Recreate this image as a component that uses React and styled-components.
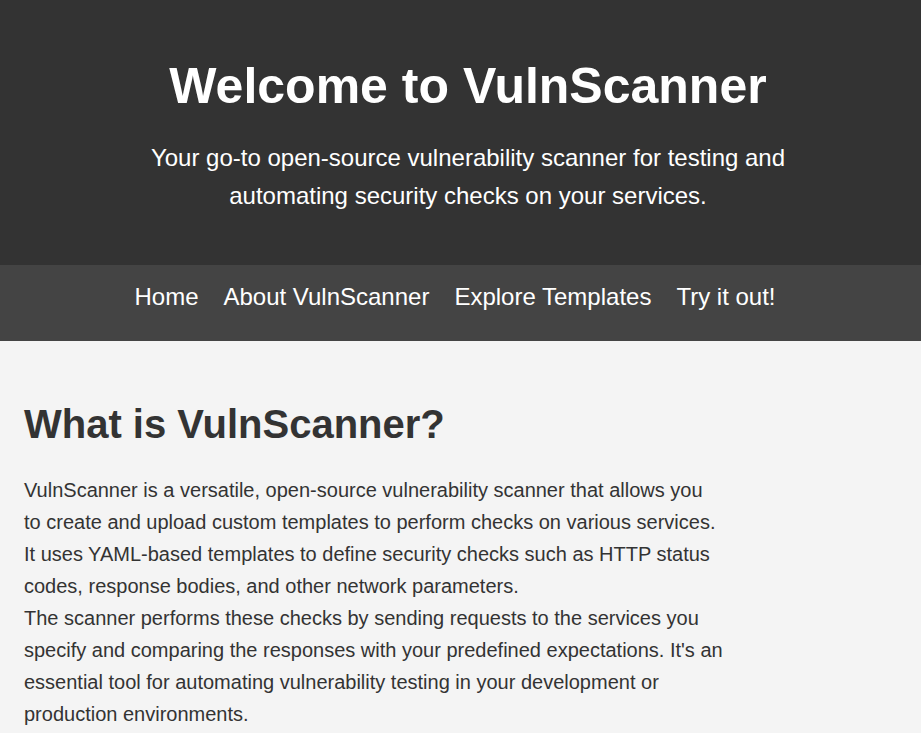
import React from "react";
import styled, { createGlobalStyle } from "styled-components";

const GlobalStyle = createGlobalStyle`
  html, body {
    margin: 0;
    padding: 0;
    background: #f4f4f4;
    font-family: "Liberation Sans", Arial, sans-serif;
    color: #333;
  }
`;

const Header = styled.header`
  background: #333;
  color: #fff;
  text-align: center;
  padding: 58px 20px 50px 35px;
`;

const Title = styled.h1`
  margin: 0 0 23px;
  font-size: 50px;
  font-weight: bold;
  line-height: 1.15;
`;

const Tagline = styled.p`
  margin: 0 auto;
  max-width: 660px;
  font-size: 24px;
  line-height: 1.6;
`;

const Nav = styled.nav`
  background: #444;
  display: flex;
  justify-content: center;
  gap: 25px;
  padding: 18px 31px 30px 20px;
`;

const NavLink = styled.a`
  color: #fff;
  text-decoration: none;
  font-size: 24px;
  line-height: 1.15;
  cursor: pointer;
`;

const Main = styled.main`
  padding: 60px 24px 40px;
`;

const Heading = styled.h2`
  margin: 0 0 27px;
  font-size: 40px;
  font-weight: bold;
  line-height: 1.15;
  color: #333;
`;

const Paragraph = styled.p`
  margin: 0;
  max-width: 700px;
  font-size: 20px;
  line-height: 1.6;
  color: #333;
`;

export default function App() {
  return (
    <>
      <GlobalStyle />
      <Header>
        <Title>Welcome to VulnScanner</Title>
        <Tagline>
          Your go-to open-source vulnerability scanner for testing and
          automating security checks on your services.
        </Tagline>
      </Header>
      <Nav>
        <NavLink>Home</NavLink>
        <NavLink>About VulnScanner</NavLink>
        <NavLink>Explore Templates</NavLink>
        <NavLink>Try it out!</NavLink>
      </Nav>
      <Main>
        <Heading>What is VulnScanner?</Heading>
        <Paragraph>
          VulnScanner is a versatile, open-source vulnerability scanner that
          allows you to create and upload custom templates to perform checks on
          various services. It uses YAML-based templates to define security
          checks such as HTTP status codes, response bodies, and other network
          parameters.
          <br />
          The scanner performs these checks by sending requests to the services
          you specify and comparing the responses with your predefined
          expectations. It's an essential tool for automating vulnerability
          testing in your development or production environments.
        </Paragraph>
      </Main>
    </>
  );
}
